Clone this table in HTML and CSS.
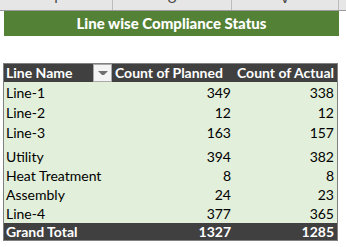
FILE: index.html
```html
<!DOCTYPE html>
<html>
<head>
<meta charset="utf-8">
<link rel="stylesheet" href="styles.css">
</head>
<body>
<div class="colhead">
  <div class="ch c1"><span>T</span></div>
  <div class="ch c2"><span>U</span></div>
  <div class="ch c3"><span>V</span></div>
  <div class="ch c4"></div>
</div>
<div class="banner">Line wise Compliance Status</div>
<div class="pivot">
  <table>
    <thead>
      <tr class="hrow">
        <th class="name"><div class="namecell"><span>Line Name</span><span class="filter"><span class="tri"></span></span></div></th>
        <th class="plan">Count of Planned</th>
        <th class="act">Count of Actual</th>
      </tr>
    </thead>
    <tbody>
      <tr class="r20"><td class="name">Line-1</td><td class="num">349</td><td class="num">338</td></tr>
      <tr class="r20"><td class="name">Line-2</td><td class="num">12</td><td class="num">12</td></tr>
      <tr class="r20"><td class="name">Line-3</td><td class="num">163</td><td class="num">157</td></tr>
      <tr class="r24"><td class="name">Utility</td><td class="num">394</td><td class="num">382</td></tr>
      <tr class="r19"><td class="name">Heat Treatment</td><td class="num">8</td><td class="num">8</td></tr>
      <tr class="r19"><td class="name">Assembly</td><td class="num">24</td><td class="num">23</td></tr>
      <tr class="r19"><td class="name">Line-4</td><td class="num">377</td><td class="num">365</td></tr>
    </tbody>
    <tfoot>
      <tr class="trow"><td class="name">Grand Total</td><td class="num">1327</td><td class="num">1285</td></tr>
    </tfoot>
  </table>
</div>
</body>
</html>
```

FILE: styles.css
```css
html, body {
  margin: 0;
  padding: 0;
  background: #ffffff;
  font-family: Lato, "Open Sans", "Liberation Sans", sans-serif;
}

.colhead {
  display: flex;
  height: 10px;
  background: #e6e6e6;
  border-bottom: 1px solid #9b9b9b;
  overflow: hidden;
}
.ch {
  box-sizing: border-box;
  height: 10px;
  border-right: 1px solid #bcbcbc;
  text-align: center;
  font-family: "Liberation Sans", sans-serif;
  font-size: 14px;
  line-height: 14px;
  color: #444444;
}
.ch span {
  display: block;
  margin-top: -9px;
}
.c1 { width: 113px; }
.c2 { width: 119px; }
.c3 { width: 107px; }
.c4 { flex: 1; border-right: none; }

.banner {
  margin-left: 4px;
  width: 335px;
  height: 25px;
  background: #538135;
  color: #ffffff;
  font-weight: 900;
  font-size: 15px;
  line-height: 25px;
  text-align: center;
}

.pivot {
  margin-top: 27px;
  margin-left: 3px;
  width: 335px;
  border: 1px solid #808080;
  box-sizing: border-box;
}

table {
  width: 100%;
  border-collapse: collapse;
  table-layout: fixed;
  font-size: 14px;
}
th, td {
  padding: 0;
  line-height: 17px;
  white-space: nowrap;
  overflow: hidden;
}
th.name, td.name { width: 108px; }
th.plan { width: 119px; }

.hrow th {
  height: 18px;
  background: #404040;
  color: #ffffff;
  font-weight: 700;
  text-align: left;
  vertical-align: bottom;
}
.namecell {
  display: flex;
  justify-content: space-between;
  align-items: stretch;
  height: 18px;
}
.namecell span:first-child {
  padding-left: 2px;
  line-height: 18px;
}
.filter {
  width: 17px;
  height: 16px;
  background: #f4f4f4;
  border: 1px solid #a9a9a9;
  display: flex;
  align-items: center;
  justify-content: center;
}
.tri {
  width: 0;
  height: 0;
  border-left: 4px solid transparent;
  border-right: 4px solid transparent;
  border-top: 4px solid #707070;
}
th.plan, th.act {
  padding-left: 3px;
  line-height: 18px;
}

tbody td {
  background: #e2efda;
  color: #000000;
  vertical-align: bottom;
  padding-bottom: 1px;
}
td.name { padding-left: 2px; }
td.num { text-align: right; padding-right: 3px; }
tr.r20 td { height: 19px; }
tr.r24 td { height: 23px; }
tr.r19 td { height: 18px; }

.trow td {
  height: 16px;
  background: #404040;
  color: #ffffff;
  font-weight: 700;
  vertical-align: middle;
}
```
